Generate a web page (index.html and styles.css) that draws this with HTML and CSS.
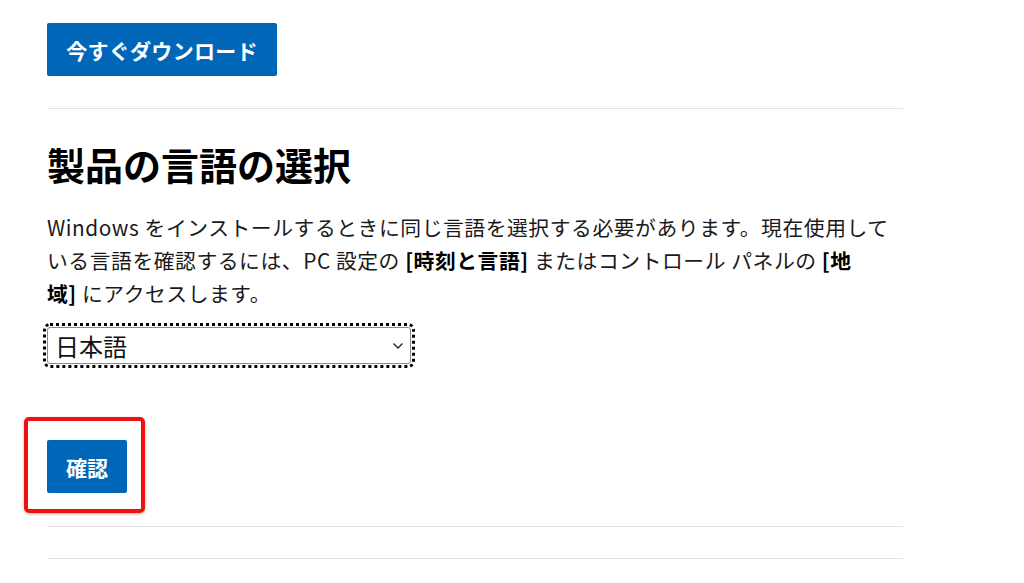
FILE: index.html
```html
<!DOCTYPE html>
<html lang="ja">
<head>
<meta charset="utf-8">
<title>製品の言語の選択</title>
<link rel="stylesheet" href="styles.css">
</head>
<body>
<main class="page">
  <a class="btn btn-download" href="#">今すぐダウンロード</a>
  <hr class="divider divider-top">
  <h2 class="title">製品の言語の選択</h2>
  <p class="desc">Windows をインストールするときに同じ言語を選択する必要があります。現在使用して<br>いる言語を確認するには、PC 設定の <b>[時刻と言語]</b> またはコントロール パネルの <b>[地<br>域]</b> にアクセスします。</p>
  <div class="select-wrap">
    <select class="lang-select">
      <option>日本語</option>
    </select>
    <svg class="chevron" width="12" height="8" viewBox="0 0 12 8"><path d="M1.5 1.5 L6 6 L10.5 1.5" fill="none" stroke="#222" stroke-width="1.3"/></svg>
  </div>
  <div class="confirm-wrap">
    <button class="btn btn-confirm">確認</button>
    <span class="highlight"></span>
  </div>
  <hr class="divider divider-mid">
  <hr class="divider divider-bottom">
</main>
</body>
</html>
```

FILE: styles.css
```css
html, body {
  margin: 0;
  padding: 0;
  background: #ffffff;
}
body {
  font-family: "Noto Sans CJK JP", "Noto Sans", sans-serif;
  color: #1a1a1a;
}
.page {
  width: 856px;
  padding: 23px 0 0 47px;
  display: flex;
  flex-direction: column;
  align-items: flex-start;
}
.btn {
  display: inline-flex;
  align-items: center;
  justify-content: center;
  box-sizing: border-box;
  height: 53px;
  background: #0067b8;
  color: #ffffff;
  font-family: "Noto Sans CJK JP", sans-serif;
  font-weight: 700;
  font-size: 21px;
  border: none;
  border-radius: 2px;
  text-decoration: none;
}
.btn-download {
  width: 230px;
  letter-spacing: 0.3px;
}
.divider {
  align-self: stretch;
  border: none;
  height: 1px;
  background: #e3e3e3;
  margin: 0;
}
.divider-top {
  margin-top: 32px;
}
.title {
  margin: 31px 0 0 0;
  font-size: 38px;
  line-height: 48px;
  font-weight: 700;
  color: #000;
}
.desc {
  margin: 23px 0 0 0;
  font-size: 20.8px;
  line-height: 33px;
  letter-spacing: 0.55px;
  color: #1a1a1a;
  white-space: nowrap;
}
.desc b {
  font-weight: 700;
  color: #000;
}
.select-wrap {
  position: relative;
  margin-top: 17px;
  outline: 3px dotted #000;
  outline-offset: 1px;
  border-radius: 3px;
}
.lang-select {
  display: block;
  appearance: none;
  -webkit-appearance: none;
  box-sizing: border-box;
  width: 364px;
  height: 37px;
  padding: 0 30px 0 7px;
  border: 1px solid #8a8a8a;
  border-radius: 3px;
  background: #ffffff;
  font-family: "Noto Sans CJK JP", sans-serif;
  font-size: 24px;
  color: #111;
  outline: none;
}
.chevron {
  position: absolute;
  right: 7px;
  top: 15px;
  pointer-events: none;
}
.confirm-wrap {
  position: relative;
  margin-top: 76px;
}
.btn-confirm {
  width: 80px;
}
.highlight {
  position: absolute;
  left: -23px;
  top: -23px;
  width: 121px;
  height: 96px;
  box-sizing: border-box;
  border: 4px solid #ee1111;
  border-radius: 5px;
  box-shadow: 0 1px 3px rgba(120, 0, 0, 0.35);
  pointer-events: none;
}
.divider-mid {
  margin-top: 33px;
}
.divider-bottom {
  margin-top: 31px;
}
```
